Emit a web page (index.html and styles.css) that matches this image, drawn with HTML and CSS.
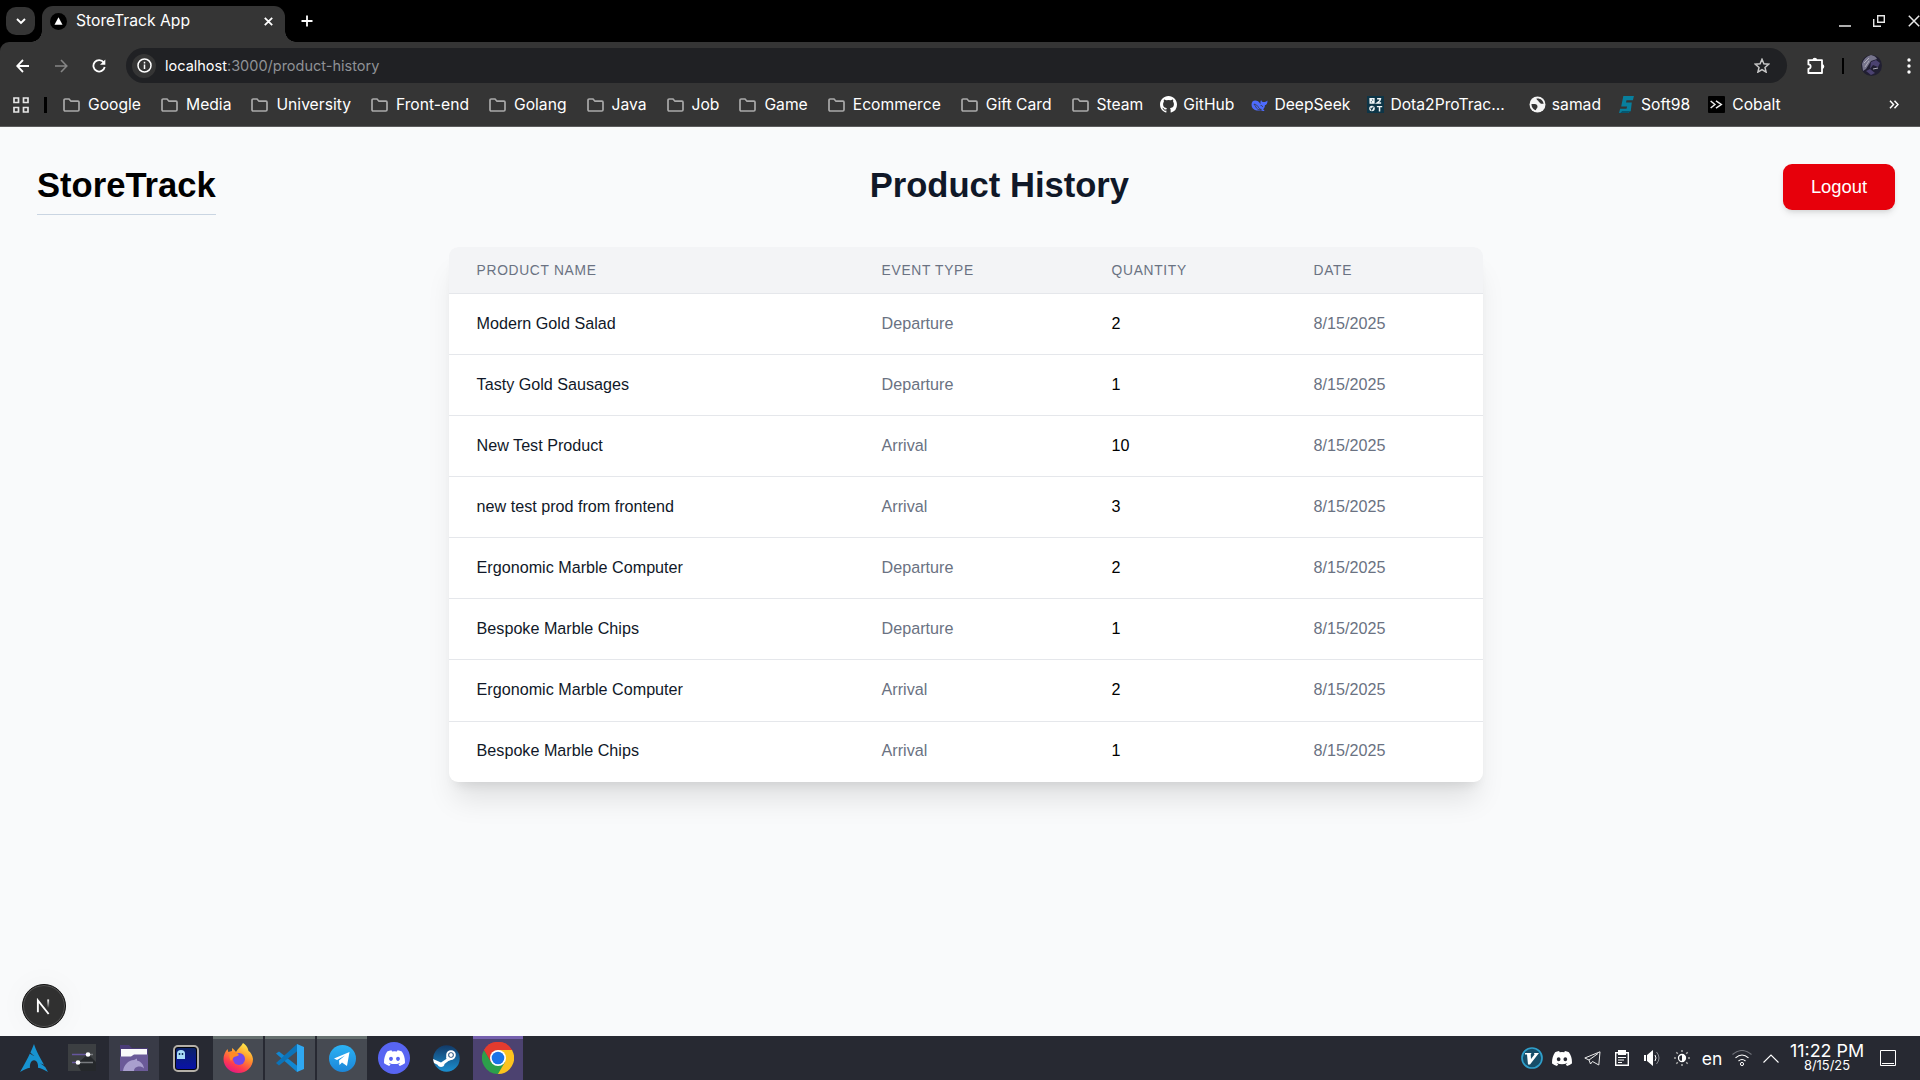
FILE: index.html
```html
<!DOCTYPE html>
<html lang="en">
<head>
<meta charset="utf-8">
<title>StoreTrack App</title>
<link rel="stylesheet" href="styles.css">
</head>
<body>
<svg class="defs" aria-hidden="true">
  <defs>
    <symbol id="folder" viewBox="0 0 17 14"><path d="M1 2.2Q1 1 2.200 1H6l2 2.200h7q1 0 1 1V11.800q0 1.200-1.200 1.200H2.200Q1 13 1 11.800Z" fill="none" stroke="#a9a9a9" stroke-width="1.700"/></symbol>
    <symbol id="discord" viewBox="0 0 24 18"><path d="M20.300 1.500A19 19 0 0 0 15.500 0l-.8 1.500a18 18 0 0 0-5.400 0L8.500 0a19 19 0 0 0-4.800 1.500C.7 6-.2 10.500.1 15A20 20 0 0 0 6 18l1.500-2-2-1 .5-.4c4 1.800 8 1.800 12 0l.5.400-2 1L18 18a20 20 0 0 0 5.900-3c.4-5.200-.9-9.700-3.600-13.500ZM8 12.300c-1.200 0-2.200-1.100-2.200-2.400S6.800 7.500 8 7.500s2.200 1.100 2.200 2.400-1 2.400-2.200 2.400Zm8 0c-1.200 0-2.200-1.100-2.200-2.400s1-2.400 2.200-2.400 2.200 1.100 2.200 2.400-1 2.400-2.200 2.400Z" fill="#fff"/></symbol>
    <linearGradient id="fox" x1=".8" y1="0" x2=".3" y2="1"><stop offset="0" stop-color="#fff44f"/><stop offset=".4" stop-color="#ff9a2b"/><stop offset=".75" stop-color="#ff3b4e"/><stop offset="1" stop-color="#e31587"/></linearGradient>
    <linearGradient id="steam" x1="0" y1="0" x2="0" y2="1"><stop offset="0" stop-color="#123a68"/><stop offset="1" stop-color="#1b8fd0"/></linearGradient>
    <linearGradient id="tg" x1="0" y1="0" x2="0" y2="1"><stop offset="0" stop-color="#2bb2f4"/><stop offset="1" stop-color="#1c86d8"/></linearGradient>
    <linearGradient id="nfade" x1="0" y1="0" x2="0" y2="1"><stop offset="0" stop-color="#fff"/><stop offset="1" stop-color="#fff" stop-opacity="0"/></linearGradient>
    <linearGradient id="blue" x1="0" y1="0" x2="0" y2="1"><stop offset="0" stop-color="#0b2267"/><stop offset="1" stop-color="#0912a8"/></linearGradient>
  </defs>
</svg>

<div class="screen">
  <div class="tabstrip">
    <div class="tab-search"><svg width="10" height="7" viewBox="0 0 10 7"><path d="M1 1l4 4 4-4" fill="none" stroke="#fff" stroke-width="1.900"/></svg></div>
    <div class="tab">
      <svg width="17" height="17" viewBox="0 0 17 17"><circle cx="8.500" cy="8.500" r="8.500"/><path d="M8.500 4.300l4 7.400h-8z" fill="#fff"/></svg>
      <span class="tab-title">StoreTrack App</span>
      <svg class="tab-close" width="9" height="9" viewBox="0 0 9 9"><path d="M.8.8l7.400 7.400M8.200.8L.8 8.200" stroke="#fff" stroke-width="1.800"/></svg>
    </div>
    <svg class="new-tab" width="12" height="12" viewBox="0 0 12 12"><path d="M6 .5v11M.5 6h11" stroke="#fff" stroke-width="1.800"/></svg>
    <div class="window-controls">
      <svg width="12" height="12" viewBox="0 0 12 12"><path d="M0 11h12" stroke="#e8e8e8" stroke-width="1.500"/></svg>
      <svg width="12" height="12" viewBox="0 0 12 12"><path d="M4.700.7h6.600v6.600H4.700zM.7 4v7.300H8" fill="none" stroke="#e8e8e8" stroke-width="1.400"/></svg>
      <svg class="win-close" width="12" height="12" viewBox="0 0 12 12"><path d="M.8.8l10.400 10.400M11.200.8L.8 11.200" stroke="#e8e8e8" stroke-width="1.500"/></svg>
    </div>
  </div>

  <div class="toolbar">
    <div class="navrow">
      <svg class="back" width="14" height="14" viewBox="0 0 14 14"><path d="M7 1L1.200 7 7 13M1.200 7H13" fill="none" stroke="#fff" stroke-width="1.800"/></svg>
      <svg class="forward" width="14" height="14" viewBox="0 0 14 14"><path d="M7 1l5.800 6L7 13M12.800 7H1" fill="none" stroke="#858585" stroke-width="1.600"/></svg>
      <svg class="reload" width="14" height="14" viewBox="0 0 14 14"><path d="M11.700 3.400A5.700 5.700 0 1 0 12.700 8" fill="none" stroke="#fff" stroke-width="1.800"/><path d="M13.300.5v5.300H8z" fill="#fff"/></svg>
      <div class="urlbar">
        <span class="site-info"><svg width="15" height="15" viewBox="0 0 15 15"><circle cx="7.500" cy="7.500" r="6.500" fill="none" stroke="#fff" stroke-width="1.500"/><path d="M7.500 6.600v4.400M7.500 3.800v1.600" stroke="#fff" stroke-width="1.500"/></svg></span>
        <span class="url"><b>localhost</b>:3000/product-history</span>
        <svg class="star" width="16" height="15" viewBox="0 0 16 15"><path d="M8 1.300l1.900 4.500 4.700.4-3.600 3.200 1.100 4.700L8 11.600l-4.100 2.500L5 9.400 1.400 6.200l4.700-.4z" fill="none" stroke="#c7c7c7" stroke-width="1.500"/></svg>
      </div>
      <svg class="puzzle" width="18" height="18" viewBox="0 0 18 18"><path d="M1.400 3.200H15V16H1.400v-4.200c3 0 3-4.400 0-4.400z" fill="none" stroke="#fff" stroke-width="1.800" stroke-linejoin="round"/><path d="M5.500 3a2.300 2.300 0 0 1 4.600 0zM15 7.300a2.300 2.300 0 0 1 0 4.600z" fill="#fff"/></svg>
      <i class="sep"></i>
      <svg class="avatar" width="21" height="21" viewBox="0 0 21 21"><circle cx="10.500" cy="10.500" r="10.500" fill="#211f32"/><path d="M1 9Q3 2 10 0q5 1 6 4l-6 2-5 8-3 2z" fill="#77758c"/><path d="M10 7l5-2 4 3-2 4-5-2-3 4zM5 16l4-2 5 4-4 2z" fill="#4b4270"/><path d="M3 8l5-5M4 12l4-6M12 14l5-1" stroke="#b0aebb" stroke-width="1"/></svg>
      <svg class="dots" width="4" height="16" viewBox="0 0 4 16" fill="#fff"><circle cx="2" cy="2" r="1.700"/><circle cx="2" cy="8" r="1.700"/><circle cx="2" cy="14" r="1.700"/></svg>
    </div>
    <div class="bookmarks">
      <svg class="apps" width="16" height="16" viewBox="0 0 16 16"><path d="M1 1h4.500v4.500H1zM10.500 1H15v4.500h-4.500zM1 10.500h4.500V15H1zM10.500 10.500H15V15h-4.500z" fill="none" stroke="#e6e6e6" stroke-width="1.700"/></svg>
      <i class="sep"></i>
      <div class="bm"><svg><use href="#folder"/></svg>Google</div>
      <div class="bm"><svg><use href="#folder"/></svg>Media</div>
      <div class="bm"><svg><use href="#folder"/></svg>University</div>
      <div class="bm"><svg><use href="#folder"/></svg>Front-end</div>
      <div class="bm"><svg><use href="#folder"/></svg>Golang</div>
      <div class="bm"><svg><use href="#folder"/></svg>Java</div>
      <div class="bm"><svg><use href="#folder"/></svg>Job</div>
      <div class="bm"><svg><use href="#folder"/></svg>Game</div>
      <div class="bm"><svg><use href="#folder"/></svg>Ecommerce</div>
      <div class="bm"><svg><use href="#folder"/></svg>Gift Card</div>
      <div class="bm last-folder"><svg><use href="#folder"/></svg>Steam</div>
      <div class="bm site"><svg viewBox="0 0 16 16"><path d="M8 0C3.600 0 0 3.600 0 8c0 3.500 2.300 6.500 5.500 7.600.4.100.5-.2.500-.4v-1.500c-2.200.5-2.700-.9-2.700-.9-.4-.9-.9-1.200-.9-1.200-.7-.5.100-.5.100-.5.800.1 1.200.8 1.200.8.700 1.200 1.900.9 2.300.7.100-.5.300-.9.500-1.100-1.800-.2-3.600-.9-3.600-3.900 0-.9.300-1.600.8-2.200-.1-.2-.4-1 .1-2.100 0 0 .7-.2 2.200.8a7.600 7.600 0 0 1 4 0c1.500-1 2.200-.8 2.200-.8.400 1.100.2 1.900.1 2.100.5.600.8 1.300.8 2.200 0 3-1.900 3.700-3.700 3.900.3.300.6.800.6 1.500v2.200c0 .2.100.5.500.4A8 8 0 0 0 16 8c0-4.400-3.600-8-8-8Z" fill="#fff"/></svg>GitHub</div>
      <div class="bm site"><svg viewBox="0 0 16 16"><path d="M.5 8.200C.5 5.800 1.800 4.300 4 4.300c1.800 0 3.600 1 5 3.400-.3-1.700-.1-3 .6-4 .3 1.300 1 1.900 2.300 2 1.300 0 2.400-.4 3.600-1.500.2 2.500-.8 4-2.400 4.500 0 1.700-.7 2.900-1.700 3.800l1.400 1.300c-1.300.4-2.400.2-3.400-.4C5 14.600.5 12.600.5 8.200Z" fill="#4d6bfe"/><path d="M2.800 7.700c1.900 0 3.200 1.100 4.500 3.400.8 1 1.600 1.500 2.500 1.500-1.700.7-3.400.2-4.600-1.200-.9-1.500-1.400-2.900-2.400-3.700ZM9 9q1.600-.5 2.200 1.400" fill="none" stroke="#353535" stroke-width=".7"/></svg>DeepSeek</div>
      <div class="bm site dota"><svg viewBox="0 0 16 16"><path d="M0 0h16v16H0z" fill="#0d3547"/><path d="M3 2.500h3.500v4H3zM2.500 2.300l4.300 4.500M9.500 2.500h3.200q0 2-3 4h3.600M9.300 10h5M11.800 10v4.500" fill="none" stroke="#f2f6f7" stroke-width="1.400"/><circle cx="4.700" cy="11.800" r="2.600" fill="#f2f6f7"/><path d="M3.500 11l1 2 1.500-3" stroke="#0d3547" fill="none"/></svg>Dota2ProTrac...</div>
      <div class="bm site"><svg viewBox="0 0 16 16"><circle cx="8" cy="8" r="7.500" fill="#f5f5f5"/><path d="M2.300 7.500h3.200c1.500 0 2.500 1 2.500 2.500s-1.500 1.500-1.500 3.500C3.800 12.800 2.300 10.500 2.300 7.500ZM7 2.400c3.500-.6 6.300 1.600 6.800 5H11c0-1.500-2-1-2-2.400 0-1-2-.8-2-2.600Z" fill="#353535"/></svg>samad</div>
      <div class="bm site"><svg viewBox="0 0 16 16"><path d="M5 0h10l-1 4H8l-.5 2.200H13L12 14l-2.500 2H1l1-4h6l.6-2.200H3z" fill="#087f9d"/><path d="M12 14h-8l-2 2h7.500z" fill="#06556e"/></svg>Soft98</div>
      <div class="bm site cobalt"><svg viewBox="0 0 16 16"><rect width="16" height="16" rx="1" fill="#000"/><path d="M2.500 4.700l4 3.300-4 3.300M7.500 4.700l5 3.300-5 3.300" fill="none" stroke="#eee" stroke-width="1.400"/></svg>Cobalt</div>
      <svg class="more" width="10" height="9" viewBox="0 0 10 9"><path d="M1 .8l3.500 3.700L1 8.200M5.500.8L9 4.500 5.500 8.200" fill="none" stroke="#fff" stroke-width="1.500"/></svg>
    </div>
  </div>

  <main class="page">
    <header class="page-header">
      <div class="brand">StoreTrack</div>
      <h1>Product History</h1>
      <button class="logout">Logout</button>
    </header>
    <div class="card">
      <table>
        <colgroup><col class="c-name"><col class="c-event"><col class="c-qty"><col class="c-date"></colgroup>
        <thead><tr><th>Product Name</th><th>Event Type</th><th>Quantity</th><th>Date</th></tr></thead>
        <tbody>
          <tr><td>Modern Gold Salad</td><td>Departure</td><td>2</td><td>8/15/2025</td></tr>
          <tr><td>Tasty Gold Sausages</td><td>Departure</td><td>1</td><td>8/15/2025</td></tr>
          <tr><td>New Test Product</td><td>Arrival</td><td>10</td><td>8/15/2025</td></tr>
          <tr><td>new test prod from frontend</td><td>Arrival</td><td>3</td><td>8/15/2025</td></tr>
          <tr><td>Ergonomic Marble Computer</td><td>Departure</td><td>2</td><td>8/15/2025</td></tr>
          <tr><td>Bespoke Marble Chips</td><td>Departure</td><td>1</td><td>8/15/2025</td></tr>
          <tr><td>Ergonomic Marble Computer</td><td>Arrival</td><td>2</td><td>8/15/2025</td></tr>
          <tr><td>Bespoke Marble Chips</td><td>Arrival</td><td>1</td><td>8/15/2025</td></tr>
        </tbody>
      </table>
    </div>
    <div class="dev-badge"><svg width="15" height="17" viewBox="0 0 16 18"><path d="M2 15V2.500L13.500 17" fill="none" stroke="#fff" stroke-width="2"/><path d="M12 1.500h2v9h-2z" fill="url(#nfade)"/></svg></div>
  </main>

  <footer class="taskbar">
    <div class="apps-row">
      <div class="app"><svg width="30" height="28" viewBox="0 0 30 28"><path d="M15 0c-1.300 3.200-2.100 5.300-3.600 8.500 1 1 2.100 2.200 4 3.500-2-.8-3.400-1.700-4.500-2.600C8.800 13.800 5.600 20 1 28c3.800-2.100 7-3.600 10-4.200-.4-3.500.9-7.600 4-7.600s4.500 4.100 4 7.600c3 .6 6.200 2.100 10 4.200l-2.800-5c-1.300-1-2.600-2.300-5.400-3.700 2 .5 3.300 1.100 4.300 1.700C18.800 9.500 17 6 15 0Z" fill="#1793d1"/></svg></div>
      <div class="app"><svg width="28" height="28" viewBox="0 0 28 28"><path d="M0 0h28v27H0z" fill="#3c3f42"/><path d="M20 10l8 8v9H13l-4-7z" fill="#25282b"/><path d="M4 10.500h16" stroke="#65569d" stroke-width="1.500"/><path d="M20 10.500h5M10 18.500h15" stroke="#777a7e" stroke-width="1.500"/><path d="M4 18.500h6" stroke="#65569d" stroke-width="1.500"/><circle cx="20" cy="10.500" r="2.300" fill="#fff"/><circle cx="10" cy="18.500" r="2.300" fill="#fff"/></svg></div>
      <div class="app hover"><svg width="30" height="28" viewBox="0 0 30 28"><path d="M1 1h9l3 3h16v10H1z" fill="#4a3b77"/><path d="M2 5h26v8H2z" fill="#fafafa"/><path d="M1 12.500h11l3-2h14V27H1z" fill="#6b5a98"/><path d="M4 27c1-6 5-10.500 11-11l3-1.500v2c4 1 6.500 4 7 8-2-2-5-2.500-7-1.500-2 .5-3 2-3 4z" fill="#a99fce"/></svg></div>
      <div class="app"><svg width="26" height="27" viewBox="0 0 26 27"><rect x="1" y="1" width="24" height="25" rx="4" fill="#05060a" stroke="#b5b0a8" stroke-width="2"/><rect x="3" y="3" width="20" height="21" rx="2" fill="url(#blue)"/><path d="M4 14V8.500q0-3.500 4-3.500t4 3.500V14z" fill="#a8dcf7"/><path d="M6.500 8v2M9.500 8v2" stroke="#12345c" stroke-width="1.500"/></svg></div>
      <div class="app open"><svg width="31" height="32" viewBox="0 0 31 32"><path d="M20 1c4 3 5 5 5.500 8 2 1 4 4 4.500 8 0 8-6.500 14-14.500 14S.5 25 .5 17c0-4 1.500-7 4-10l.8 3L9 9V6c2 1 3 3 4 4 2-4 5-5 7-9Z" fill="url(#fox)"/><circle cx="16" cy="17" r="6" fill="#7347e8"/><path d="M7 11c3-2 7-1 9 2-2 2-5 1-6 3l-2 3c-2-3-2-6-1-8Z" fill="#ff8a22"/></svg></div>
      <div class="app open"><svg width="28" height="28" viewBox="0 0 28 28"><path d="M0 9.500l3-2L24 24l-3 4z" fill="#1187d2"/><path d="M0 19l3 2.500L24 5l-3-5z" fill="#0c73b8"/><path d="M21 0l7 3v22l-7 3z" fill="#2fa8f2"/></svg></div>
      <div class="app open"><svg width="27" height="27" viewBox="0 0 27 27"><circle cx="13.500" cy="13.500" r="13.500" fill="url(#tg)"/><path d="M5 13.500L20.500 7 18 21l-5-3.500-2.500 2.400-.5-4.400 6-5-8 4.500z" fill="#fff"/></svg></div>
      <div class="app"><span class="disc"><svg width="21" height="16"><use href="#discord"/></svg></span></div>
      <div class="app"><svg width="27" height="27" viewBox="0 0 27 27"><circle cx="13.500" cy="13.500" r="13.200" fill="url(#steam)"/><path d="M0 14l8 3.500 6-4 2 2-4.500 3.500c0 3-5 4.500-7 .800L1 18z" fill="#fff"/><path d="M13 13l1.500-5 6 6-5 2z" fill="#fff"/><circle cx="18" cy="10" r="3.800" fill="#1d4d7b" stroke="#fff" stroke-width="2"/><circle cx="18" cy="10" r="1.900" fill="#fff"/></svg></div>
      <div class="app active"><svg width="32" height="32" viewBox="0 0 32 32"><path d="M16 16L2.100 8A16 16 0 0 1 29.900 8z" fill="#e33b2e"/><path d="M16 16l13.900-8A16 16 0 0 1 16 32l7-12z" fill="#fcc31e"/><path d="M16 8h13.900l.5 1L23 20l-6 12h-1l-2-8z" fill="#fcc31e"/><path d="M2.100 8A16 16 0 0 0 16 32l6.900-12H9z" fill="#2c9f4b"/><path d="M2.100 8L9 20l2-9 5-3h13.900A16 16 0 0 0 2.100 8Z" fill="#e33b2e"/><circle cx="16" cy="16" r="8" fill="#fff"/><circle cx="16" cy="16" r="6.300" fill="#1a73e8"/></svg></div>
    </div>
    <div class="tray">
      <div class="tray-item"><svg width="22" height="22" viewBox="0 0 22 22"><circle cx="11" cy="11" r="10" fill="#174d68" stroke="#2f9fcb" stroke-width="1.700"/><path d="M4 6h6.500L9.700 7.500 10 12l3.500-4.500-.5-1.500h5L9 17.500H7L6 7.500H4z" fill="#fff"/></svg></div>
      <div class="tray-item"><svg width="20" height="15"><use href="#discord"/></svg></div>
      <div class="tray-item"><svg width="17" height="15" viewBox="0 0 17 15"><path d="M.8 7L16 .8 14.800 14 8.500 10.500 6.500 13 5 9zM5 9l9-6.500" fill="none" stroke="#eee" stroke-width="1"/></svg></div>
      <div class="tray-item"><svg width="14" height="16" viewBox="0 0 14 16"><path d="M.7 2.700h12.600v12.600H.7z" fill="none" stroke="#fff" stroke-width="1.400"/><path d="M3 0h8v5H3z" fill="#fff"/><path d="M3 7.500h8M3 10h6M3 12.500h4" stroke="#fff" stroke-width="1.200"/></svg></div>
      <div class="tray-item"><svg width="16" height="16" viewBox="0 0 16 16"><path d="M0 5h2v6H0zM3 5l6-5v16l-6-5z" fill="#fff"/><path d="M11 5q2 3 0 6" fill="none" stroke="#fff"/><path d="M12.500 2q5 6 0 12" fill="none" stroke="#888a91"/></svg></div>
      <div class="tray-item"><svg width="16" height="16" viewBox="0 0 16 16"><circle cx="8" cy="8" r="3.500" fill="none" stroke="#fff" stroke-width="1.300"/><path d="M8 4.500a3.500 3.500 0 0 1 0 7z" fill="#fff"/><path d="M8 0v2M8 14v2M0 8h2M14 8h2M2.300 2.300l1.500 1.500M12.200 12.200l1.500 1.500M2.300 13.700l1.500-1.500M12.200 3.800l1.500-1.500" stroke="#aaa" stroke-width="1.500"/></svg></div>
      <div class="tray-item lang">en</div>
      <div class="tray-item"><svg width="20" height="16" viewBox="0 0 20 16"><path d="M.5 4.500q9.500-8 19 0" fill="none" stroke="#70727a" stroke-width="1.100"/><path d="M3.500 7.800q6.500-5.600 13 0M6.500 11q3.500-3 7 0" fill="none" stroke="#fff" stroke-width="1.100"/><circle cx="10" cy="14" r="1.600" fill="none" stroke="#fff"/></svg></div>
      <div class="tray-item chevron"><svg width="16" height="9" viewBox="0 0 16 9"><path d="M.5 8.500L8 1l7.500 7.500" fill="none" stroke="#fff" stroke-width="1.100"/></svg></div>
      <div class="clock"><span class="time">11:22 PM</span><span class="date">8/15/25</span></div>
      <svg class="desktop" width="16" height="16" viewBox="0 0 16 16"><path d="M.5.5h15v15H.5zM2 13.500h12" fill="none" stroke="#fff"/></svg>
    </div>
  </footer>
</div>
</body>
</html>
```
FILE: styles.css
```css
* { box-sizing: border-box; }
body { margin: 0; overflow: hidden; background: #000; }
svg { display: block; flex: none; }
.defs { position: absolute; width: 0; height: 0; }

.screen {
  display: flex;
  flex-direction: column;
  width: 1920px;
  height: 1080px;
  font-family: Inter, "Noto Sans", sans-serif;
  color: #fff;
}

/* tab strip */
.tabstrip { display: flex; align-items: center; height: 42px; padding-left: 6px; background: #000; flex: none; }
.tab-search { display: flex; align-items: center; justify-content: center; width: 29px; height: 28px; border-radius: 10px; background: #353535; }
.tab {
  position: relative;
  display: flex;
  align-items: center;
  align-self: flex-end;
  width: 243px;
  height: 36px;
  margin-left: 7px;
  padding: 0 12px 6px 8px;
  border-radius: 11px 11px 0 0;
  background: #353535;
}
.tab::before, .tab::after { content: ""; position: absolute; bottom: 0; width: 11px; height: 11px; }
.tab::before { left: -11px; background: radial-gradient(circle at 0 0, transparent 10.5px, #353535 11px); }
.tab::after { right: -11px; background: radial-gradient(circle at 100% 0, transparent 10.5px, #353535 11px); }
.tab-title { margin-left: 9px; font-size: 15.7px; line-height: 20px; white-space: nowrap; }
.tab-close { margin-left: auto; }
.new-tab { margin-left: 16px; }
.window-controls { display: flex; gap: 22px; margin-left: auto; }
.win-close { margin-left: 1px; }

/* toolbar */
.toolbar { flex: none; height: 85px; background: #353535; border-bottom: 1px solid #5c5c5c; border-top-left-radius: 9px; }
.navrow { display: flex; align-items: center; height: 47px; padding-left: 16px; }
.forward { margin-left: 24px; }
.reload { margin-left: 24px; }
.urlbar { display: flex; align-items: center; width: 1661px; height: 35px; margin-left: 20px; padding: 0 17px 0 6px; border-radius: 18px; background: #202124; }
.site-info { display: flex; align-items: center; justify-content: center; width: 24px; height: 24px; border-radius: 50%; background: #353535; }
.url { margin-left: 9px; font-size: 14.5px; line-height: 20px; color: #8f9296; }
.url b { font-weight: 400; color: #fff; }
.star { margin-left: auto; }
.puzzle { margin-left: 20px; }
.sep { flex: none; width: 2px; height: 16px; background: #000; }
.navrow .sep { margin-left: 17px; }
.avatar { margin-left: 17px; }
.dots { margin-left: 25px; }

.bookmarks { display: flex; align-items: center; height: 31px; padding-left: 13px; }
.bookmarks .sep { width: 3px; margin: 0 16px 0 15px; }
.bm { display: flex; align-items: center; flex: none; margin-right: 20px; font-size: 15.66px; line-height: 20px; white-space: nowrap; }
.bm svg { width: 17px; height: 14px; margin-right: 8px; }
.bm.last-folder { margin-right: 17px; }
.bm.site { margin-right: 17px; }
.bm.site svg { width: 17px; height: 17px; margin-right: 6px; }
.bm.dota { margin-right: 24px; }
.bm.cobalt { margin-left: 1px; }
.bm.cobalt svg { margin-right: 7px; }
.more { margin-left: auto; margin-right: 21px; }

/* page */
.page { position: relative; flex: 1; background: #f9fafb; font-family: "Liberation Sans", Arial, sans-serif; color: #000; }
.page-header { display: flex; justify-content: space-between; align-items: flex-start; height: 120px; padding: 37px 25px 0 37px; }
.brand { height: 51px; border-bottom: 1px solid #cad5e2; font-size: 34.6px; font-weight: 700; line-height: 42px; }
h1 { margin: 0; font-size: 34.6px; font-weight: 700; line-height: 42px; color: #101828; }
.logout {
  width: 112px;
  height: 46px;
  padding: 0;
  border: 0;
  border-radius: 9px;
  background: #e7000b;
  color: #fff;
  font: 18.4px/46px "Liberation Sans", Arial, sans-serif;
  box-shadow: 0 4px 7px -1px rgba(0, 0, 0, .1), 0 2px 5px -2px rgba(0, 0, 0, .1);
}
.card {
  width: 1034px;
  margin-left: 449px;
  overflow: hidden;
  border-radius: 9px;
  background: #fff;
  box-shadow: 0 23px 29px -6px rgba(0, 0, 0, .1), 0 9px 12px -7px rgba(0, 0, 0, .1);
}
table { width: 100%; table-layout: fixed; border-collapse: separate; border-spacing: 0; }
.c-name { width: 405px; }
.c-event { width: 230px; }
.c-qty { width: 202px; }
.c-date { width: 197px; }
th { height: 47px; padding: 0 27.6px; border-bottom: 1px solid #e5e7eb; background: #f3f4f6; color: #6a7282; font-size: 13.8px; font-weight: 400; letter-spacing: .69px; text-align: left; text-transform: uppercase; }
td { height: 61px; padding: 0 27.6px 2px; border-bottom: 1px solid #e5e7eb; font-size: 16.15px; }
tbody tr:nth-child(7) td { height: 62px; padding-bottom: 3px; }
tbody tr:last-child td { height: 60px; padding-bottom: 4px; border-bottom: 0; }
td:first-child { color: #101828; }
td:nth-child(2), td:nth-child(4) { color: #6a7282; }
.dev-badge {
  position: absolute;
  left: 22px;
  bottom: 8px;
  display: flex;
  align-items: center;
  justify-content: center;
  width: 44px;
  height: 44px;
  padding-right: 1px;
  border: 1px solid #111;
  border-radius: 50%;
  background: #303030;
  box-shadow: inset 0 0 0 1px #555, 0 0 30px rgba(0, 0, 0, .04);
}

/* taskbar */
.taskbar { position: relative; display: flex; justify-content: space-between; flex: none; height: 44px; background: #272932; }
.apps-row { display: flex; gap: 2px; padding-left: 9px; }
.app { display: flex; align-items: center; justify-content: center; width: 50px; height: 44px; }
.app:first-child { margin-right: -4px; }
.app.hover { background: #393b47; }
.app.open { background: #464a52; border-top: 3px solid #66706f; padding-bottom: 3px; }
.app.active { background: #4c4270; border-top: 3px solid #7560ad; padding-bottom: 3px; }
.disc { display: flex; align-items: center; justify-content: center; width: 32px; height: 32px; border-radius: 50%; background: #5865f2; }
.tray { display: flex; align-items: center; padding-right: 24px; }
.tray-item { display: flex; align-items: center; justify-content: center; width: 30px; height: 44px; }
.tray-item.lang { font-size: 17.5px; }
.tray-item.chevron { width: 27px; }
.clock { display: flex; flex-direction: column; align-items: center; width: 86px; padding-bottom: 1px; }
.time { font-size: 17.9px; line-height: 17px; white-space: nowrap; }
.date { font-size: 12.9px; line-height: 14px; }
.desktop { margin-left: 10px; }
```
